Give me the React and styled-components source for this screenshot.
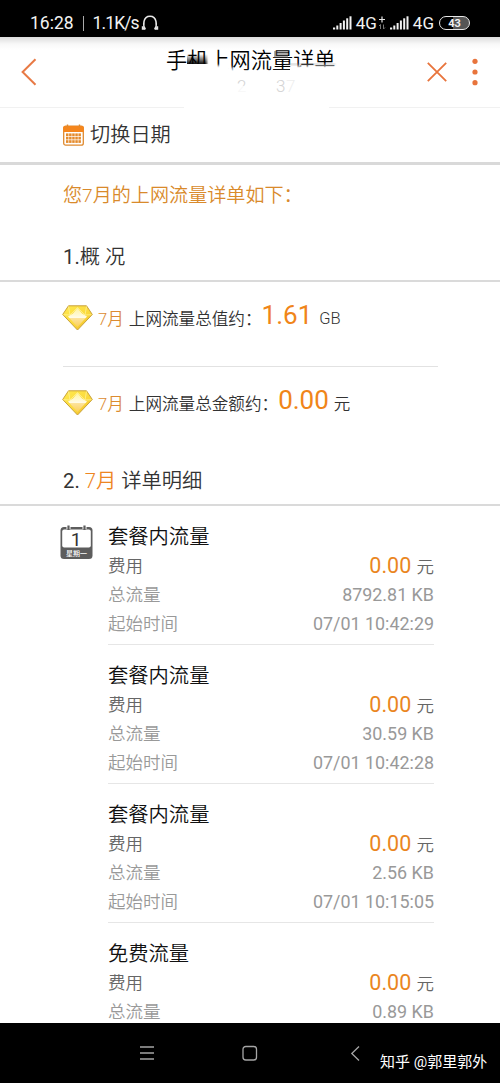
import React from 'react';
import styled, { createGlobalStyle } from 'styled-components';

const records = [
  { title: '套餐内流量', fee: '0.00', total: '8792.81 KB', start: '07/01 10:42:29' },
  { title: '套餐内流量', fee: '0.00', total: '30.59 KB', start: '07/01 10:42:28' },
  { title: '套餐内流量', fee: '0.00', total: '2.56 KB', start: '07/01 10:15:05' },
  { title: '免费流量', fee: '0.00', total: '0.89 KB' },
];

const App = () => (
  <Screen>
    <GlobalStyle />
    <StatusBar>
      <StatusText>16:28</StatusText>
      <StatusDivider />
      <StatusText $tight>1.1K/s</StatusText>
      <HeadphoneIcon />
      <StatusSpacer />
      <SignalIcon />
      <Network>4G</Network>
      <DataIcon />
      <SignalIcon />
      <Network>4G</Network>
      <Battery>
        <BatteryLevel>43</BatteryLevel>
      </Battery>
    </StatusBar>
    <Header>
      <BackIcon />
      <TitleBlock>
        <Title>手机上网流量详单</Title>
        <Erased />
      </TitleBlock>
      <CloseIcon />
      <MoreIcon />
    </Header>
    <DateSwitch>
      <CalendarIcon />
      <span>切换日期</span>
    </DateSwitch>
    <Intro>您7月的上网流量详单如下：</Intro>
    <SectionTitle $height={50} $line={50}>
      <Digits>1.</Digits>概 况
    </SectionTitle>
    <Summary>
      <GemIcon />
      <Month>7月</Month>
      <SummaryLabel>上网流量总值约：</SummaryLabel>
      <Amount>1.61</Amount>
      <Unit $gap={7}>GB</Unit>
    </Summary>
    <Divider />
    <Summary>
      <GemIcon />
      <Month>7月</Month>
      <SummaryLabel>上网流量总金额约：</SummaryLabel>
      <Amount>0.00</Amount>
      <Unit $gap={5}>元</Unit>
    </Summary>
    <SectionTitle $height={55} $line={60}>
      <Digits>2. </Digits>
      <Orange>7月</Orange> 详单明细
    </SectionTitle>
    <Details>
      <DayIcon />
      <RecordList>
        {records.map((record, index) => (
          <Record key={index} $last={index === records.length - 1}>
            <RecordTitle>{record.title}</RecordTitle>
            <RecordRow $fee>
              <span>费用</span>
              <span>
                <Fee>{record.fee}</Fee> 元
              </span>
            </RecordRow>
            <RecordRow>
              <span>总流量</span>
              <Value>{record.total}</Value>
            </RecordRow>
            {record.start && (
              <RecordRow>
                <span>起始时间</span>
                <Value>{record.start}</Value>
              </RecordRow>
            )}
          </Record>
        ))}
      </RecordList>
    </Details>
    <NavBar>
      <NavIcons />
      <Watermark>知乎 @郭里郭外</Watermark>
    </NavBar>
  </Screen>
);

const HeadphoneIcon = () => (
  <HeadphoneSvg width="18" height="16" viewBox="0 0 18 16" fill="none" stroke="#e8e8e8" strokeWidth="1.5">
    <path d="M4.200 14.200C2 11 1.600 1.200 9 1.200s7 9.800 4.800 13" />
    <path d="M1.800 11.200v2.600h2.600M16.200 11.200v2.600h-2.600" strokeWidth="2" />
  </HeadphoneSvg>
);

const SignalIcon = () => (
  <svg width="19" height="14" viewBox="0 0 19 14" fill="#f2f2f2">
    <rect x="0" y="11.500" width="2.200" height="2" />
    <rect x="3.300" y="9.500" width="2" height="4" />
    <rect x="6.600" y="7" width="2" height="6.500" />
    <rect x="9.900" y="4.500" width="2" height="9" />
    <rect x="13.200" y="2.300" width="2" height="11.200" />
    <rect x="16.500" y="0.300" width="2" height="13.200" />
  </svg>
);

const DataIcon = () => (
  <DataSvg width="8" height="15" viewBox="0 0 8 15" fill="none">
    <path d="M4 0.500v6M1 3.500h6" stroke="#e8e8e8" strokeWidth="1.200" />
    <path d="M2.500 13V8.500L1 10M5.500 8.500V13L7 11.500" stroke="#777" strokeWidth="1" />
  </DataSvg>
);

const BackIcon = () => (
  <svg width="16" height="28" viewBox="0 0 16 28" fill="none" stroke="#e87a45" strokeWidth="2">
    <path d="M14.500 1.200L1.600 14l12.900 12.800" />
  </svg>
);

const CloseIcon = () => (
  <svg width="20" height="20" viewBox="0 0 20 20" stroke="#e8743c" strokeWidth="1.800">
    <path d="M0.800 0.800l18.400 18.400M19.200 0.800L0.800 19.200" />
  </svg>
);

const MoreIcon = () => (
  <MoreSvg width="6" height="28" viewBox="0 0 6 28" fill="#e8743c">
    <circle cx="3" cy="3.300" r="2.600" />
    <circle cx="3" cy="14" r="2.600" />
    <circle cx="3" cy="24.700" r="2.600" />
  </MoreSvg>
);

const CalendarIcon = () => (
  <svg width="21" height="22" viewBox="0 0 21 22">
    <rect x="0.700" y="2.200" width="19.600" height="19" rx="2" fill="#fff" stroke="#df8a30" strokeWidth="1.300" />
    <path d="M0.300 3.500Q0.300 2 2 2h17q1.700 0 1.700 1.500V8H0.300z" fill="#f5861d" />
    <path d="M4.500 0.500v3M16.500 0.500v3" stroke="#df8a30" strokeWidth="1.400" />
    <g fill="#e58b2c">
      {[9.4, 12.8, 16.2].map((y) =>
        [3, 6.1, 9.2, 12.3, 15.4].map((x) => (
          <rect key={`${x}-${y}`} x={x} y={y} width="2.500" height="2.700" />
        ))
      )}
    </g>
  </svg>
);

const GemIcon = () => (
  <svg width="31" height="26" viewBox="0 0 31 26">
    <defs>
      <linearGradient id="gemBody" x1="0" y1="0" x2="1" y2="1">
        <stop offset="0" stopColor="#ffe94f" />
        <stop offset="0.600" stopColor="#fbd93b" />
        <stop offset="1" stopColor="#e8a81c" />
      </linearGradient>
      <linearGradient id="gemShine" x1="0" y1="0" x2="0" y2="1">
        <stop offset="0" stopColor="#fff3a0" />
        <stop offset="0.500" stopColor="#fffbe6" />
        <stop offset="0.550" stopColor="#fde39a" />
        <stop offset="1" stopColor="#fbcf5a" />
      </linearGradient>
    </defs>
    <path
      d="M6.500 0.800h18l5.800 8.700L15.500 25 0.700 9.500z"
      fill="url(#gemBody)"
      stroke="#c9a23c"
      strokeWidth="1"
      strokeLinejoin="round"
    />
    <path d="M15.500 3L20 8.500l5 3L15.500 22 6 11.500l5-3z" fill="url(#gemShine)" />
    <path
      d="M6.500 1.500l1.500 8.500M24.500 1.500L23 10M1.500 9.700l6.500.3 7.500-7.500L23 10l6.500-.3"
      fill="none"
      stroke="#fff3a0"
      strokeWidth="0.700"
    />
  </svg>
);

const DayIcon = () => (
  <svg width="33" height="34" viewBox="0 0 33 34">
    <rect x="0.500" y="2" width="32" height="32" rx="3.500" fill="#5d5d5d" />
    <rect x="2.200" y="4.500" width="28.600" height="18" rx="2" fill="#fff" />
    <path d="M8.500 0.500v3.500M24.500 0.500v3.500" stroke="#fff" strokeWidth="4" />
    <path d="M8.500 0.500v4.500M24.500 0.500v4.500" stroke="#5d5d5d" strokeWidth="2.200" />
    <DayNumber x="16" y="20.500">1</DayNumber>
    <DayName x="16.500" y="30.500">星期一</DayName>
  </svg>
);

const NavIcons = () => (
  <svg width="222" height="18" viewBox="0 0 222 18" fill="none" stroke="#a5a5a5" strokeWidth="1.300">
    <path d="M1 3h14M1 9h14M1 15h14" />
    <rect x="104" y="2.500" width="13.500" height="13.500" rx="2.800" />
    <path d="M220 2.500L212.800 9.500 220 16.500" />
  </svg>
);

// white brush strokes over the title and the phone number under it
const Erased = () => (
  <ErasedSvg width="180" height="72" viewBox="0 0 180 72">
    <defs>
      <linearGradient id="smudge" x1="0" y1="0" x2="0" y2="1">
        <stop offset="0" stopColor="#000" stopOpacity="0" />
        <stop offset="1" stopColor="#000" stopOpacity="0.950" />
      </linearGradient>
      <linearGradient id="smear" x1="0" y1="0" x2="0" y2="1">
        <stop offset="0" stopColor="#fff" stopOpacity="0" />
        <stop offset="1" stopColor="#fff" />
      </linearGradient>
      <filter id="soft">
        <feGaussianBlur stdDeviation="1" />
      </filter>
    </defs>
    <rect x="26" y="17" width="21.500" height="10" fill="url(#smudge)" />
    <rect x="24" y="27" width="24" height="10" fill="#fff" />
    <rect x="129" y="27" width="48" height="4" fill="url(#smear)" />
    <rect x="129" y="30.500" width="48" height="6" fill="#fff" />
    <rect x="124" y="26.500" width="50" height="1.500" fill="#888" opacity="0.500" filter="url(#soft)" />
    <rect x="113" y="14" width="14" height="7" fill="#555" opacity="0.500" />
    <g filter="url(#soft)" fill="#fff">
      <rect x="46" y="28.500" width="23" height="8" />
      <rect x="46" y="12" width="8" height="18" />
      <rect x="64" y="30.500" width="8" height="6" />
      <rect x="20" y="34" width="150" height="8" />
    </g>
    <rect x="23" y="66" width="145" height="6" fill="#fff" />
    <Ghost x="76" y="55">2</Ghost>
    <Ghost x="115" y="55">3</Ghost>
    <Ghost x="125" y="55">7</Ghost>
    <rect x="74" y="49" width="14" height="8" fill="#fff" opacity="0.800" />
    <rect x="125" y="43" width="12" height="14" fill="#fff" opacity="0.600" />
  </ErasedSvg>
);

const GlobalStyle = createGlobalStyle`
  body {
    margin: 0;
    background: #ffffff;
  }

  * {
    box-sizing: border-box;
  }
`;

const Screen = styled.div`
  width: 500px;
  height: 1083px;
  display: flex;
  flex-direction: column;
  overflow: hidden;
  background: #ffffff;
  color: #333333;
  font-family: Roboto, 'Noto Sans CJK SC', sans-serif;
  font-weight: 350;
  white-space: pre;

  svg {
    flex-shrink: 0;
    display: block;
  }
`;

const StatusBar = styled.div`
  flex: 0 0 37px;
  display: flex;
  align-items: center;
  padding: 9px 30px 0;
  background: #000000;
  color: #f2f2f2;
`;

const StatusText = styled.span`
  font-size: 17.5px;
  font-weight: 400;
  letter-spacing: ${({ $tight }) => ($tight ? '-0.9px' : '0')};
`;

const HeadphoneSvg = styled.svg`
  margin-left: 2px;
`;

const StatusDivider = styled.span`
  width: 1px;
  height: 15px;
  margin: 0 9px;
  background: #aaaaaa;
`;

const StatusSpacer = styled.span`
  flex: 1;
`;

const Network = styled.span`
  margin-left: 4px;
  font-size: 17px;
  font-weight: 400;
`;

const DataSvg = styled.svg`
  margin: 0 4px 0 1px;
`;

const Battery = styled.span`
  width: 31px;
  height: 14px;
  margin-left: 5px;
  border: 1.5px solid #e8e8e8;
  border-radius: 7px;
  background: linear-gradient(90deg, #000000 45%, #555555 45%);
  display: flex;
  justify-content: center;
  align-items: center;
`;

const BatteryLevel = styled.span`
  font-size: 11px;
  font-weight: 700;
  line-height: 11px;
`;

const Header = styled.div`
  flex: 0 0 71px;
  display: flex;
  align-items: center;
  padding: 0 22px 0 21px;
  border-bottom: 1px solid #f1f1f1;
  background: linear-gradient(#dcdcdc, #f8f8f8 7px, #ffffff 13px);
`;

const TitleBlock = styled.div`
  flex: 1;
  align-self: flex-start;
  position: relative;
  margin-left: 129px;
`;

const Title = styled.div`
  font-size: 21.2px;
  line-height: 47px;
  color: #000000;
`;

const ErasedSvg = styled.svg`
  position: absolute;
  top: 0;
  left: -5px;
`;

const Ghost = styled.text`
  font-size: 17px;
  fill: #d4d4d4;
`;

const MoreSvg = styled.svg`
  margin-left: 25px;
`;

const DateSwitch = styled.div`
  flex: 0 0 57px;
  display: flex;
  align-items: center;
  gap: 6px;
  padding-left: 63px;
  border-bottom: 3px solid #d9d9d9;
  font-size: 20.2px;

  span {
    margin-top: -3px;
  }
`;

const Intro = styled.div`
  flex: 0 0 67px;
  padding: 0 63px;
  font-size: 19.1px;
  line-height: 62px;
  color: #d98a2b;
`;

const SectionTitle = styled.div`
  flex: none;
  height: ${({ $height }) => $height}px;
  padding-left: 63px;
  border-bottom: 2px solid #dadada;
  font-size: 20.3px;
  line-height: ${({ $line }) => $line}px;
`;

const Digits = styled.span`
  font-weight: 400;
`;

const Orange = styled.span`
  color: #ee8522;
`;

const Summary = styled.div`
  flex: 0 0 84px;
  display: flex;
  align-items: center;
  padding: 0 0 13px 62px;
`;

const Month = styled.span`
  margin: 1px 5px 0;
  font-size: 16.6px;
  color: #dc8b31;
`;

const SummaryLabel = styled.span`
  margin-top: 1px;
  font-size: 16.6px;
`;

const Amount = styled.span`
  margin-top: -5px;
  font-size: 26px;
  font-weight: 400;
  line-height: 30px;
  color: #f08519;
`;

const Unit = styled.span`
  margin: 1px 0 0 ${({ $gap }) => $gap}px;
  font-size: 16.5px;
`;

const Divider = styled.div`
  flex: 0 0 1px;
  margin: 0 62px 0 63px;
  background: #e2e2e2;
`;

const Details = styled.div`
  flex: 1;
  min-height: 0;
  display: flex;
  align-items: flex-start;
  gap: 15px;
  padding: 0 66px 0 60px;

  > svg {
    margin-top: 19px;
  }
`;

const RecordList = styled.div`
  flex: 1;
`;

const Record = styled.div`
  height: ${({ $last }) => ($last ? 'auto' : '139px')};
  padding-top: 16px;
  border-bottom: ${({ $last }) => ($last ? 'none' : '1px solid #e6e6e6')};
`;

const RecordTitle = styled.div`
  font-size: 20.3px;
  line-height: 30px;
  color: #111111;
`;

const RecordRow = styled.div`
  display: flex;
  justify-content: space-between;
  height: 29px;
  font-size: 17.5px;
  line-height: 28px;
  color: ${({ $fee }) => ($fee ? '#666666' : '#999999')};
`;

const Fee = styled.span`
  margin-right: 1px;
  font-size: 21.5px;
  font-weight: 400;
  color: #ea861f;
`;

const Value = styled.span`
  font-size: 17.9px;
  font-weight: 400;
`;

const NavBar = styled.div`
  flex: 0 0 60px;
  display: flex;
  align-items: center;
  padding-left: 139px;
  background: #000000;
`;

const Watermark = styled.span`
  margin: 15px 0 0 19px;
  font-size: 15px;
  font-weight: 400;
  color: #ffffff;
`;

const DayNumber = styled.text`
  font-size: 19px;
  font-weight: 400;
  text-anchor: middle;
  fill: #333333;
`;

const DayName = styled.text`
  font-size: 7px;
  font-weight: 500;
  text-anchor: middle;
  fill: #ffffff;
`;

export default App;
